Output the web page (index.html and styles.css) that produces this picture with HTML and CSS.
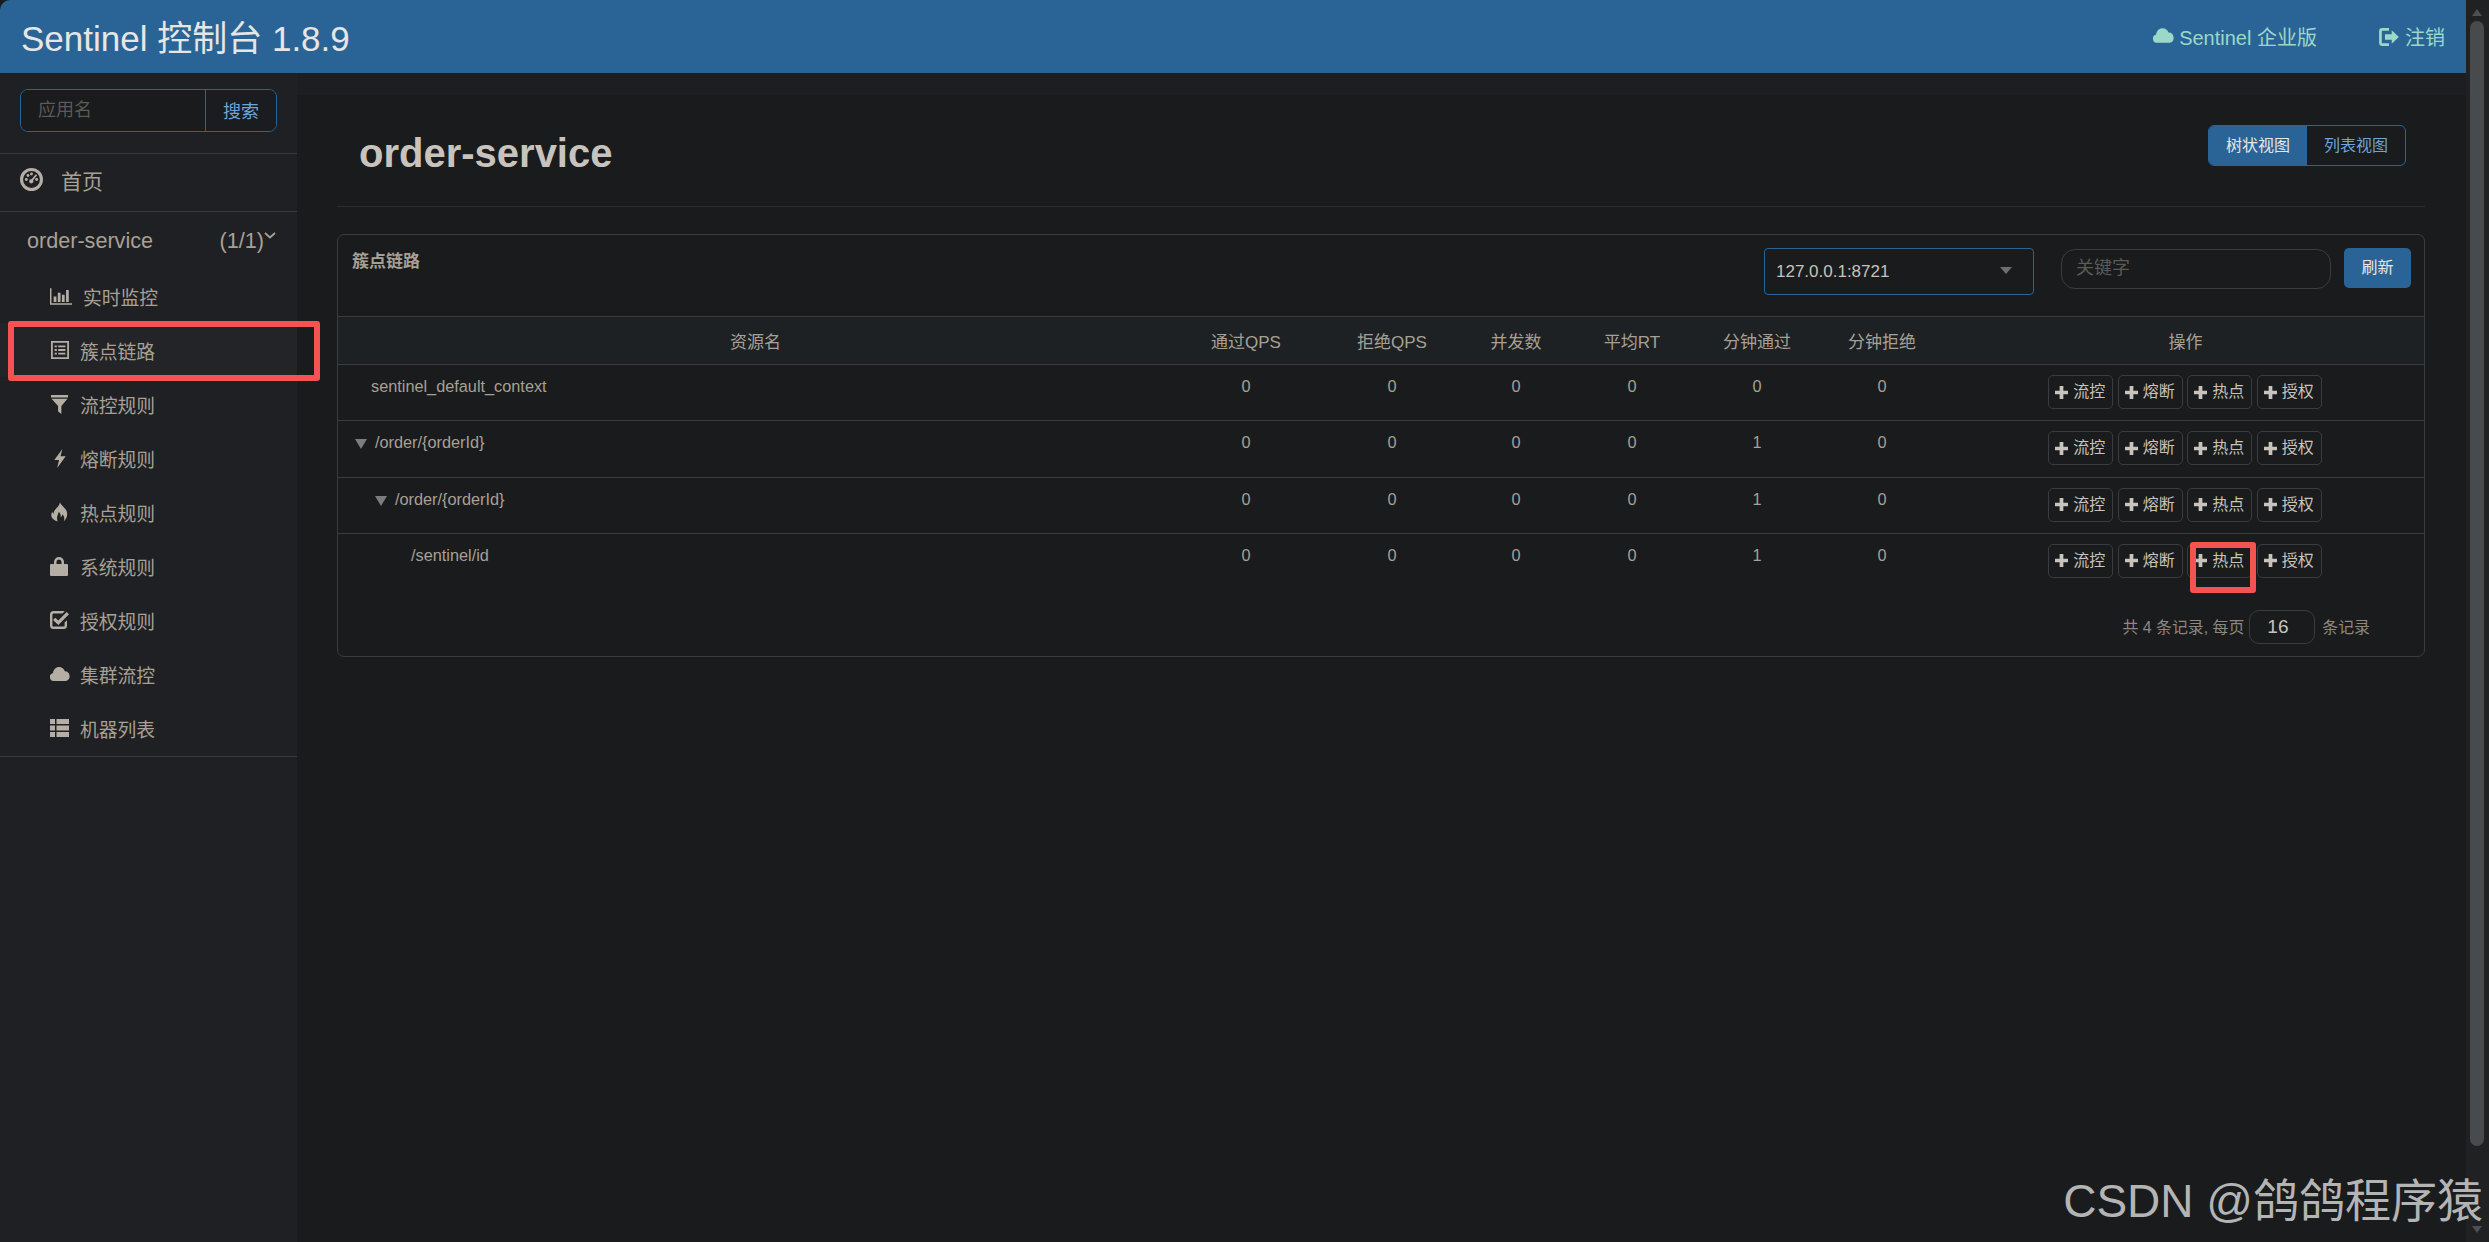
FILE: index.html
```html
<!DOCTYPE html>
<html lang="zh">
<head>
<meta charset="utf-8">
<title>Sentinel 控制台</title>
<link rel="stylesheet" href="styles.css">
</head>
<body>
<svg class="defs" aria-hidden="true">
  <symbol id="i-dash" viewBox="0 0 24 24"><path fill-rule="evenodd" d="M12 0a12 12 0 1 0 0 24 12 12 0 0 0 0-24zm0 3.2a8.800 8.800 0 1 1 0 17.600 8.800 8.800 0 0 1 0-17.600z"/><circle cx="6.600" cy="12" r="1.500"/><circle cx="8.300" cy="7.800" r="1.500"/><circle cx="12" cy="6.200" r="1.500"/><circle cx="17.400" cy="12" r="1.500"/><path d="M16.500 6.500l1.400 1.100-4.200 5.300a2.200 2.200 0 1 1-1.600-1.200z"/></symbol>
  <symbol id="i-bar" viewBox="0 0 24 18"><path d="M0 0h1.600v16.400H24V18H0zM4 9h3v6H4zM8.500 5h3v10h-3zM13 7h3v8h-3zM17.500 2h3v13h-3z"/></symbol>
  <symbol id="i-list" viewBox="0 0 20 20"><path fill-rule="evenodd" d="M0 0h20v20H0zM2 2v16h16V2z"/><path d="M4 5h2.500v2H4zM8 5h8v2H8zM4 9h2.500v2H4zM8 9h8v2H8zM4 13h2.500v2H4zM8 13h8v2H8z"/></symbol>
  <symbol id="i-filter" viewBox="0 0 18 20"><path d="M0 0h18v2.500H0zM.5 4h17L11 11.500V20l-3.500-2.500v-6z"/></symbol>
  <symbol id="i-flash" viewBox="0 0 14 20"><path d="M9.500 0L1 11.500h5L4 20l9-12.500H7.500z"/></symbol>
  <symbol id="i-fire" viewBox="0 0 18 20"><path fill-rule="evenodd" d="M9.500 0c1 3 5 5 6.800 8.500 1.800 3.800.6 8.300-2.800 11.500 1.300-3.200.4-5.500-1.500-7.500-.2 1.700-.8 2.600-1.800 3.200.3-2.200-.3-4.600-2-6-.1 2.300-3 4.800-1.200 10.300C3 18.800.5 16.500.3 13.700c-.1-1.500.5-3 1.200-4 .1 1 .5 1.700 1.300 2.100C2.700 7 8.500 5.500 9.500 0z"/></symbol>
  <symbol id="i-lock" viewBox="0 0 18 19"><path fill-rule="evenodd" d="M4 7V5a5 5 0 0 1 10 0v2h3a1 1 0 0 1 1 1v10a1 1 0 0 1-1 1H1a1 1 0 0 1-1-1V8a1 1 0 0 1 1-1zm2.500 0h5V5a2.500 2.500 0 0 0-5 0z"/></symbol>
  <symbol id="i-check" viewBox="0 0 19 18"><path d="M3.500 0h11.300l-2.300 2.400h-9A1.200 1.200 0 0 0 2.400 3.600v10.800a1.200 1.200 0 0 0 1.200 1.200h9.800a1.200 1.200 0 0 0 1.200-1.200v-2.800l2.400-2.400v5.300a3.500 3.500 0 0 1-3.500 3.500h-10A3.500 3.500 0 0 1 0 14.500v-11A3.500 3.500 0 0 1 3.500 0z"/><path d="M5.300 6.700l3 2.700L16.700 1 19 3.300 8.300 14 3 9z"/></symbol>
  <symbol id="i-cloud" viewBox="0 0 20 14"><path d="M16 14H4a4 4 0 0 1-1-7.900C3.200 2.600 6 0 9 0c2.800 0 5 1.700 5.800 4.200A5 5 0 0 1 16 14z"/></symbol>
  <symbol id="i-th" viewBox="0 0 19 18"><path d="M0 0h5v5H0zM6.500 0H19v5H6.500zM0 6.500h5v5H0zM6.500 6.500H19v5H6.500zM0 13h5v5H0zM6.500 13H19v5H6.500z"/></symbol>
  <symbol id="i-out" viewBox="0 0 22 20"><path d="M3.500 0H11v3H4a1 1 0 0 0-1 1v12a1 1 0 0 0 1 1h7v3H3.500A3.500 3.500 0 0 1 0 16.500v-13A3.500 3.500 0 0 1 3.500 0z"/><path d="M14 2.500L22 10l-8 7.500V13H6.500V7H14z"/></symbol>
  <symbol id="i-plus" viewBox="0 0 14 14"><path d="M5 0h4v5h5v4H9v5H5V9H0V5h5z"/></symbol>
</svg>

<div class="app">
  <div class="page">
    <header class="navbar">
      <a class="brand">Sentinel 控制台 1.8.9</a>
      <nav class="nav-right">
        <a class="nav-link"><svg class="nav-cloud"><use href="#i-cloud"/></svg>Sentinel 企业版</a>
        <a class="nav-link nav-logout"><svg class="nav-out"><use href="#i-out"/></svg>注销</a>
      </nav>
    </header>
    <div class="body-row">
      <aside class="sidebar">
        <div class="search">
          <div class="search-input">应用名</div>
          <div class="search-btn">搜索</div>
        </div>
        <a class="home"><svg class="home-icon"><use href="#i-dash"/></svg>首页</a>
        <div class="app-block">
          <div class="app-title"><span>order-service</span><span class="app-count">(1/1)<svg class="chev" viewBox="0 0 12 7"><path d="M1 1l5 4.500L11 1" fill="none" stroke="currentColor" stroke-width="1.800"/></svg></span></div>
          <a class="item first"><span class="ico"><svg class="ico-bar"><use href="#i-bar"/></svg></span>实时监控</a>
          <a class="item active"><span class="ico"><svg class="ico-list"><use href="#i-list"/></svg></span>簇点链路</a>
          <a class="item"><span class="ico"><svg class="ico-filter"><use href="#i-filter"/></svg></span>流控规则</a>
          <a class="item"><span class="ico"><svg class="ico-flash"><use href="#i-flash"/></svg></span>熔断规则</a>
          <a class="item"><span class="ico"><svg class="ico-fire"><use href="#i-fire"/></svg></span>热点规则</a>
          <a class="item"><span class="ico"><svg class="ico-lock"><use href="#i-lock"/></svg></span>系统规则</a>
          <a class="item"><span class="ico"><svg class="ico-check"><use href="#i-check"/></svg></span>授权规则</a>
          <a class="item"><span class="ico"><svg class="ico-cloud"><use href="#i-cloud"/></svg></span>集群流控</a>
          <a class="item"><span class="ico"><svg class="ico-th"><use href="#i-th"/></svg></span>机器列表</a>
        </div>
      </aside>
      <main class="main">
        <div class="main-inner">
          <div class="page-head">
            <h1>order-service</h1>
            <div class="view-group">
              <a class="view-btn on">树状视图</a>
              <a class="view-btn">列表视图</a>
            </div>
          </div>
          <section class="panel">
            <div class="panel-head">
              <div class="panel-title">簇点链路</div>
              <div class="select">127.0.0.1:8721<i class="caret"></i></div>
              <div class="keyword">关键字</div>
              <a class="refresh">刷新</a>
            </div>
            <table class="tree">
              <colgroup>
                <col class="c-name"><col class="c-qps"><col class="c-qps"><col class="c-conc"><col class="c-rt"><col class="c-min1"><col class="c-min2"><col class="c-ops">
              </colgroup>
              <thead>
                <tr><th>资源名</th><th>通过QPS</th><th>拒绝QPS</th><th>并发数</th><th>平均RT</th><th>分钟通过</th><th>分钟拒绝</th><th>操作</th></tr>
              </thead>
              <tbody>
                <tr>
                  <td class="name lv0">sentinel_default_context</td><td>0</td><td>0</td><td>0</td><td>0</td><td>0</td><td>0</td>
                  <td class="ops"><div class="ops-row"><a class="op"><svg class="plus"><use href="#i-plus"/></svg>流控</a><a class="op"><svg class="plus"><use href="#i-plus"/></svg>熔断</a><a class="op"><svg class="plus"><use href="#i-plus"/></svg>热点</a><a class="op"><svg class="plus"><use href="#i-plus"/></svg>授权</a></div></td>
                </tr>
                <tr>
                  <td class="name lv1"><i class="tri"></i>/order/{orderId}</td><td>0</td><td>0</td><td>0</td><td>0</td><td>1</td><td>0</td>
                  <td class="ops"><div class="ops-row"><a class="op"><svg class="plus"><use href="#i-plus"/></svg>流控</a><a class="op"><svg class="plus"><use href="#i-plus"/></svg>熔断</a><a class="op"><svg class="plus"><use href="#i-plus"/></svg>热点</a><a class="op"><svg class="plus"><use href="#i-plus"/></svg>授权</a></div></td>
                </tr>
                <tr>
                  <td class="name lv2"><i class="tri"></i>/order/{orderId}</td><td>0</td><td>0</td><td>0</td><td>0</td><td>1</td><td>0</td>
                  <td class="ops"><div class="ops-row"><a class="op"><svg class="plus"><use href="#i-plus"/></svg>流控</a><a class="op"><svg class="plus"><use href="#i-plus"/></svg>熔断</a><a class="op"><svg class="plus"><use href="#i-plus"/></svg>热点</a><a class="op"><svg class="plus"><use href="#i-plus"/></svg>授权</a></div></td>
                </tr>
                <tr>
                  <td class="name lv3">/sentinel/id</td><td>0</td><td>0</td><td>0</td><td>0</td><td>1</td><td>0</td>
                  <td class="ops"><div class="ops-row"><a class="op"><svg class="plus"><use href="#i-plus"/></svg>流控</a><a class="op"><svg class="plus"><use href="#i-plus"/></svg>熔断</a><a class="op marked"><svg class="plus"><use href="#i-plus"/></svg>热点</a><a class="op"><svg class="plus"><use href="#i-plus"/></svg>授权</a></div></td>
                </tr>
              </tbody>
            </table>
            <div class="pager">
              <span>共 4 条记录, 每页</span>
              <div class="page-size">16</div>
              <span>条记录</span>
            </div>
          </section>
        </div>
      </main>
    </div>
  </div>
  <div class="scrollbar">
    <i class="arrow up"></i>
    <div class="thumb"></div>
    <i class="arrow down"></i>
  </div>
  <div class="watermark">CSDN @鸽鸽程序猿</div>
</div>
</body>
</html>
```

FILE: styles.css
```css
*, *::before, *::after { box-sizing: border-box; }
html, body { margin: 0; padding: 0; height: 100%; background: #191b1d; overflow: hidden; }
body { font-family: "Liberation Sans", "Noto Sans CJK SC", sans-serif; color: #a8a095; }
a { text-decoration: none; color: inherit; }
.defs { position: absolute; width: 0; height: 0; }
svg { fill: currentColor; display: block; }

.app { position: relative; display: flex; width: 2489px; height: 1242px; }
.page { flex: 1; min-width: 0; display: flex; flex-direction: column; }

.navbar {
  height: 73px; flex: none; background: #2a6496; border-top-left-radius: 10px;
  display: flex; align-items: center; justify-content: space-between; padding: 0 21px 0 21px;
}
.brand { font-size: 35px; color: #e8e6e3; position: relative; top: -1px; }
.nav-right { display: flex; align-items: center; gap: 61px; }
.nav-link { display: flex; align-items: center; font-size: 20px; color: #9bd8c8; }
.nav-cloud { width: 21px; height: 15px; margin-right: 5px; margin-top: -3px; }
.nav-out { width: 22px; height: 18px; margin-right: 5px; }

.body-row { flex: 1; display: flex; min-height: 0; }
.sidebar { width: 297px; flex: none; background: #1f2023; }
.search { display: flex; height: 43px; margin: 16px 20px 21px; border: 1px solid #2a6496; border-radius: 8px; font-size: 18px; }
.search-input { width: 185px; background: #191b1d; color: #5c5a55; border-right: 1px solid #2a6496; border-radius: 7px 0 0 7px; padding: 5px 0 0 17px; }
.search-btn { flex: 1; background: #1a1c1f; color: #6da5d8; border-radius: 0 7px 7px 0; text-align: center; line-height: 45px; }

.home { display: flex; align-items: center; height: 59px; border-top: 1px solid #38393c; border-bottom: 1px solid #38393c; padding: 0 0 6px 20px; font-size: 21px; }
.home-icon { width: 23px; height: 23px; margin-right: 18px; color: #b5aea4; }

.app-block { border-bottom: 1px solid #38393c; height: 545px; }
.app-title { display: flex; justify-content: space-between; align-items: center; height: 57px; padding: 1px 21px 0 27px; font-size: 21.600px; }
.app-count { display: flex; align-items: flex-start; }
.chev { width: 12px; height: 7px; margin-top: 4px; }
.item { position: relative; display: flex; align-items: center; height: 54px; padding-left: 80px; font-size: 18.800px; }
.item.first { padding-left: 83px; }
.item.active { background: #232427; }
.item.active::after {
  content: ""; position: absolute; left: 8px; top: -2px; width: 312px; height: 60px;
  border: 6px solid #f55353; border-radius: 3px; z-index: 3;
}
.ico { position: absolute; left: 50px; top: 50%; width: 22px; height: 22px; transform: translateY(-50%); display: flex; align-items: center; justify-content: flex-start; color: #b5aea4; }
.ico-bar { width: 22px; height: 17px; }
.ico-list { width: 18px; height: 18px; margin-left: 1px; }
.ico-filter { width: 17px; height: 19px; margin-left: 1px; }
.ico-flash { width: 14px; height: 19px; margin-left: 3px; }
.ico-fire { width: 17px; height: 20px; margin-left: 1px; }
.ico-lock { width: 18px; height: 19px; }
.ico-check { width: 19px; height: 18px; }
.ico-cloud { width: 20px; height: 14px; }
.ico-th { width: 19px; height: 18px; }

.main { flex: 1; min-width: 0; padding-top: 22px; background: #1d1e21; }
.main-inner { height: 100%; background: #191b1d; padding: 0 41px 0 40px; }

.page-head { height: 112px; border-bottom: 1px solid #2c2e30; display: flex; align-items: flex-start; justify-content: space-between; padding: 0 19px 0 22px; }
h1 { margin: 36px 0 0; font-size: 40px; line-height: 44px; font-weight: 700; color: #c8c3bc; }
.view-group { display: flex; height: 41px; margin-top: 30px; border: 1px solid #2a6496; border-radius: 6px; font-size: 16px; }
.view-btn { width: 98px; text-align: center; line-height: 39px; color: #6da5d8; }
.view-btn.on { background: #2a6496; color: #e8e6e3; border-radius: 5px 0 0 5px; }

.panel { margin-top: 27px; height: 423px; border: 1px solid #3a3c3f; border-radius: 7px; }
.panel-head { height: 81px; display: flex; align-items: flex-start; padding: 13px 13px 0 14px; }
.panel-title { font-size: 17px; font-weight: 700; line-height: 28px; margin-right: auto; color: #a8a095; }
.select { position: relative; width: 270px; height: 47px; border: 1px solid #2a6496; border-radius: 4px; font-size: 17px; color: #c8c3bc; line-height: 45px; padding-left: 11px; }
.caret { position: absolute; right: 21px; top: 18px; border: 6.500px solid transparent; border-top: 7px solid #6d6e6e; border-bottom: 0; }
.keyword { width: 270px; height: 40px; margin: 1px 13px 0 27px; border: 1px solid #3a3c3f; border-radius: 14px; font-size: 18px; color: #5c5a55; line-height: 37px; padding-left: 14px; }
.refresh { width: 67px; height: 40px; background: #2a6496; border-radius: 5px; text-align: center; line-height: 40px; font-size: 16px; color: #e8e6e3; }

.tree { width: 100%; table-layout: fixed; border-collapse: collapse; font-size: 16.300px; }
.c-name { width: 835px; } .c-qps { width: 146px; } .c-conc { width: 102px; } .c-rt { width: 130px; }
.c-min1 { width: 120px; } .c-min2 { width: 130px; } .c-ops { width: auto; }
.tree th { height: 48px; padding: 0; background: #1e2123; border-top: 1px solid #3a3c3f; border-bottom: 1px solid #3a3c3f; font-weight: 400; font-size: 17px; color: #a8a095; text-align: center; }
.tree td { height: 56.300px; padding: 10px 0 0; text-align: center; vertical-align: top; line-height: 22px; border-top: 1px solid #3a3c3f; }
.tree tbody tr:first-child td { border-top: 0; }
.tree td.name { text-align: left; }
.lv0 { padding-left: 33px !important; }
.lv1 { padding-left: 17px !important; }
.lv2 { padding-left: 37px !important; }
.lv3 { padding-left: 73px !important; }
.tri { display: inline-block; border: 6.500px solid transparent; border-top: 10px solid #7c7d7d; border-bottom: 0; margin-right: 8px; vertical-align: -1px; }
.tree td.ops { padding-top: 10px; }
.ops-row { display: flex; justify-content: center; gap: 4.500px; margin-left: -1px; }
.op { position: relative; display: flex; align-items: center; width: 65px; height: 34px; border: 1px solid #3a3c3f; border-radius: 5px; padding-left: 6px; font-size: 16px; color: #c8c3bc; white-space: nowrap; }
.plus { width: 13px; height: 13px; margin-right: 5px; flex: none; }
.op.marked::after { content: ""; position: absolute; left: 2px; top: -3px; width: 66px; height: 51px; border: 6px solid #f55353; border-radius: 3px; }

.pager { display: flex; align-items: center; justify-content: flex-end; gap: 5px; margin-top: 20px; padding-right: 54px; font-size: 15.900px; color: #8f887d; }
.page-size { width: 66px; height: 34px; border: 1px solid #3a3c3f; border-radius: 10px; font-size: 19px; color: #c8c3bc; line-height: 32px; padding-left: 17px; margin-right: 2px; }

.scrollbar { width: 23px; flex: none; background: #1f2123; display: flex; flex-direction: column; align-items: center; padding-right: 2px; }
.arrow { flex: none; border: 5.500px solid transparent; }
.arrow.up { margin-top: 9px; border-top: 0; border-bottom: 7px solid #4d5053; }
.arrow.down { margin: 0 0 9px; border-bottom: 0; border-top: 7px solid #4d5053; }
.thumb { width: 14px; height: 1125px; margin: 5px 0 auto; background: #484b4e; border-radius: 7px; }

.watermark { position: absolute; right: 6px; bottom: 14px; font-size: 46px; line-height: 54px; color: #b4b4b4; white-space: nowrap; }
```
